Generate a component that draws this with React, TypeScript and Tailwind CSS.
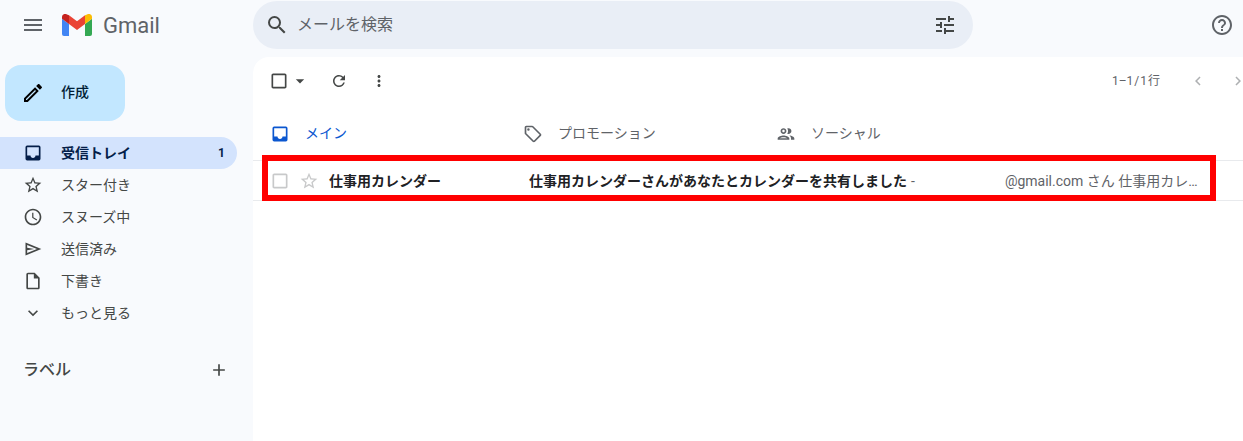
const icons = {
  menu: 'M3 18h18v-2H3v2zm0-5h18v-2H3v2zm0-7v2h18V6H3z',
  search:
    'M15.5 14h-.79l-.28-.27A6.47 6.47 0 0 0 16 9.5 6.5 6.5 0 1 0 9.5 16c1.61 0 3.09-.59 4.23-1.57l.27.28v.79l5 4.99L20.49 19l-4.99-5zm-6 0C7.01 14 5 11.99 5 9.5S7.01 5 9.5 5 14 7.01 14 9.5 11.99 14 9.5 14z',
  tune: 'M3 17v2h6v-2H3zM3 5v2h10V5H3zm10 16v-2h8v-2h-8v-2h-2v6h2zM7 9v2H3v2h4v2h2V9H7zm14 4v-2H11v2h10zm-6-4h2V7h4V5h-4V3h-2v6z',
  help: 'M11 18h2v-2h-2v2zm1-16C6.48 2 2 6.48 2 12s4.48 10 10 10 10-4.48 10-10S17.52 2 12 2zm0 18c-4.41 0-8-3.59-8-8s3.59-8 8-8 8 3.59 8 8-3.59 8-8 8zm0-14c-2.21 0-4 1.79-4 4h2c0-1.1.9-2 2-2s2 .9 2 2c0 2-3 1.75-3 5h2c0-2.25 3-2.5 3-5 0-2.21-1.79-4-4-4z',
  pencil:
    'M14.06 9.02l.92.92L5.92 19H5v-.92l9.06-9.06M17.66 3c-.25 0-.51.1-.7.29l-1.83 1.83 3.75 3.75 1.83-1.83a.996.996 0 0 0 0-1.41l-2.34-2.34c-.2-.2-.45-.29-.71-.29zm-3.6 3.19L3 17.25V21h3.75L17.81 9.94l-3.75-3.75z',
  inbox:
    'M19 3H5a2 2 0 0 0-2 2v14a2 2 0 0 0 2 2h14a2 2 0 0 0 2-2V5a2 2 0 0 0-2-2zm0 12h-4c0 1.66-1.34 3-3 3s-3-1.34-3-3H5V5h14v10z',
  star: 'M22 9.24l-7.19-.62L12 2 9.19 8.63 2 9.24l5.46 4.73L5.82 21 12 17.27 18.18 21l-1.63-7.03L22 9.24zM12 15.4l-3.76 2.27 1-4.28-3.32-2.88 4.38-.38L12 6.1l1.71 4.04 4.38.38-3.32 2.88 1 4.28L12 15.4z',
  clock:
    'M11.99 2C6.47 2 2 6.48 2 12s4.47 10 9.99 10C17.52 22 22 17.52 22 12S17.52 2 11.99 2zM12 20c-4.42 0-8-3.58-8-8s3.58-8 8-8 8 3.58 8 8-3.58 8-8 8zm.5-13H11v6l5.25 3.15.75-1.23-4.5-2.67z',
  send: 'M3 4.3L22 12 3 19.7zM5 7.3v3.1l8.6 1.6L5 13.6v3.1L16.7 12z',
  draft:
    'M14 2H6c-1.1 0-1.99.9-1.99 2L4 20c0 1.1.89 2 1.99 2H18c1.1 0 2-.9 2-2V8l-6-6zm4 18H6V4h7v5h5v11z',
  chevronDown: 'M7.41 8.59L12 13.17l4.59-4.58L18 10l-6 6-6-6 1.41-1.41z',
  plus: 'M19 13h-6v6h-2v-6H5v-2h6V5h2v6h6v2z',
  checkbox:
    'M19 5v14H5V5h14m0-2H5c-1.1 0-2 .9-2 2v14c0 1.1.9 2 2 2h14c1.1 0 2-.9 2-2V5c0-1.1-.9-2-2-2z',
  caret: 'M7 10l5 5 5-5z',
  refresh:
    'M17.65 6.35A7.958 7.958 0 0 0 12 4c-4.42 0-7.99 3.58-7.99 8s3.57 8 7.99 8c3.73 0 6.84-2.55 7.73-6h-2.08A5.99 5.99 0 0 1 12 18c-3.31 0-6-2.69-6-6s2.69-6 6-6c1.66 0 3.14.69 4.22 1.78L13 11h7V4l-2.35 2.35z',
  more: 'M12 8c1.1 0 2-.9 2-2s-.9-2-2-2-2 .9-2 2 .9 2 2 2zm0 2c-1.1 0-2 .9-2 2s.9 2 2 2 2-.9 2-2-.9-2-2-2zm0 6c-1.1 0-2 .9-2 2s.9 2 2 2 2-.9 2-2-.9-2-2-2z',
  chevronLeft: 'M15.41 7.41L14 6l-6 6 6 6 1.41-1.41L10.83 12z',
  chevronRight: 'M8.59 16.59L10 18l6-6-6-6-1.41 1.41L13.17 12z',
  tag: 'M21.41 11.58l-9-9C12.05 2.22 11.55 2 11 2H4c-1.1 0-2 .9-2 2v7c0 .55.22 1.05.59 1.42l9 9c.36.36.86.58 1.41.58s1.05-.22 1.41-.59l7-7c.37-.36.59-.86.59-1.41s-.23-1.06-.59-1.42zM13 20.01L4 11V4h7v-.01l9 9-7 7.02z M6.5 5A1.5 1.5 0 1 0 6.5 8 1.5 1.5 0 0 0 6.5 5z',
  group:
    'M9 13.75c-2.34 0-7 1.17-7 3.5V19h14v-1.75c0-2.33-4.66-3.5-7-3.5zM4.34 17c.84-.58 2.87-1.25 4.66-1.25s3.82.67 4.66 1.25H4.34zM9 12c1.93 0 3.5-1.57 3.5-3.5S10.93 5 9 5 5.5 6.57 5.5 8.5 7.07 12 9 12zm0-5c.83 0 1.5.67 1.5 1.5S9.83 10 9 10s-1.5-.67-1.5-1.5S8.17 7 9 7zm7.04 6.81c1.16.84 1.96 1.96 1.96 3.44V19h4v-1.75c0-2.02-3.5-3.17-5.96-3.44zM15 12c1.93 0 3.5-1.57 3.5-3.5S16.93 5 15 5c-.54 0-1.04.13-1.5.35.63.89 1 1.98 1 3.15s-.37 2.26-1 3.15c.46.22.96.35 1.5.35z',
};

function Icon({ d, className }: { d: string; className: string }) {
  return (
    <svg viewBox="0 0 24 24" fill="currentColor" fillRule="evenodd" className={`shrink-0 ${className}`}>
      <path d={d} />
    </svg>
  );
}

function GmailLogo() {
  return (
    <svg viewBox="0 0 30 22" className="h-[22px] w-[30px] shrink-0">
      <path d="M2 22h5V10L0 4.8V20a2 2 0 0 0 2 2z" fill="#4285f4" />
      <path d="M23 22h5a2 2 0 0 0 2-2V4.8L23 10z" fill="#34a853" />
      <path d="M23 1.2V10l7-5.2V3c0-2.6-3-4-5-2.5z" fill="#fbbc04" />
      <path d="M7 10V1.2l8 6 8-6V10l-8 6z" fill="#ea4335" />
      <path d="M0 3v1.8L7 10V1.2L5 .5C3-1 0 .4 0 3z" fill="#c5221f" />
    </svg>
  );
}

function NavItem({ d, label, active, count }: { d: string; label: string; active?: boolean; count?: string }) {
  return (
    <div
      className={`flex h-8 w-[237px] items-center rounded-r-full pl-[23px] pr-[12px] text-[14px] ${
        active ? 'bg-[#d3e3fd] font-bold text-[#041e49]' : 'text-[#444746]'
      }`}
    >
      <Icon d={d} className={`h-5 w-5 ${active ? 'text-[#041e49]' : 'text-[#444746]'}`} />
      <span className="ml-[18px] flex-1">{label}</span>
      {count && <span className="text-[12px]">{count}</span>}
    </div>
  );
}

function Tab({ d, label, active }: { d: string; label: string; active?: boolean }) {
  return (
    <div className={`flex h-full w-[253px] items-center pl-[17px] ${active ? 'text-[#0b57d0]' : 'text-[#5f6368]'}`}>
      <Icon d={d} className="h-5 w-5" />
      <span className="ml-[15px] text-[14px]">{label}</span>
    </div>
  );
}

export default function App() {
  return (
    <div
      className="relative flex h-[441px] w-[1243px] flex-col overflow-hidden bg-[#f8fafd] text-[#202124]"
      style={{ fontFamily: 'Roboto, "Noto Sans CJK JP", sans-serif' }}
    >
      <header className="flex h-[57px] shrink-0 items-start">
        <div className="flex h-[50px] w-[253px] shrink-0 items-center pl-[21px]">
          <Icon d={icons.menu} className="h-6 w-6 text-[#5f6368]" />
          <div className="ml-[17px]">
            <GmailLogo />
          </div>
          <span className="ml-[11px] mt-[2px] text-[22px] leading-none text-[#5f6368]">Gmail</span>
        </div>
        <div className="mt-px flex h-12 w-[720px] items-center rounded-full bg-[#e9eef6] pl-[12px] pr-[16px]">
          <Icon d={icons.search} className="h-6 w-6 text-[#444746]" />
          <span className="ml-[8px] flex-1 text-[16px] text-[#5f6368]">メールを検索</span>
          <Icon d={icons.tune} className="h-6 w-6 text-[#444746]" />
        </div>
        <div className="flex h-[50px] flex-1 items-center justify-end pr-[9px]">
          <Icon d={icons.help} className="h-6 w-6 text-[#5f6368]" />
        </div>
      </header>

      <div className="flex min-h-0 flex-1">
        <aside className="w-[253px] shrink-0">
          <div className="ml-[5px] mt-2 flex h-14 w-[120px] items-center rounded-2xl bg-[#c2e7ff] pb-[1px] pl-[16px] text-[14px] font-medium text-[#001d35]">
            <Icon d={icons.pencil} className="h-6 w-6 text-black" />
            <span className="ml-[16px]">作成</span>
          </div>
          <nav className="mt-4">
            <NavItem d={icons.inbox} label="受信トレイ" active count="1" />
            <NavItem d={icons.star} label="スター付き" />
            <NavItem d={icons.clock} label="スヌーズ中" />
            <NavItem d={icons.send} label="送信済み" />
            <NavItem d={icons.draft} label="下書き" />
            <NavItem d={icons.chevronDown} label="もっと見る" />
          </nav>
          <div className="mt-[29px] flex w-[237px] items-center justify-between pl-[23px] pr-[8px]">
            <span className="text-[16px] font-medium text-[#444746]">ラベル</span>
            <Icon d={icons.plus} className="h-[20px] w-[20px] text-[#444746]" />
          </div>
        </aside>

        <main className="flex min-w-0 flex-1 flex-col rounded-tl-2xl bg-white">
          <div className="flex h-[48px] shrink-0 items-center text-[#444746]">
            <Icon d={icons.checkbox} className="ml-[16px] h-5 w-5" />
            <Icon d={icons.caret} className="ml-[1px] h-5 w-5" />
            <Icon d={icons.refresh} className="ml-[20px] h-[18px] w-[18px]" />
            <Icon d={icons.more} className="ml-[22px] h-[18px] w-[18px]" />
            <span className="ml-auto text-[12px] text-[#5f6368] [word-spacing:-2px]">1–1 / 1 行</span>
            <Icon d={icons.chevronLeft} className="ml-[29px] h-[18px] w-[18px] text-[#aeb0b2]" />
            <Icon d={icons.chevronRight} className="ml-[22px] mr-[-4px] h-[18px] w-[18px] text-[#aeb0b2]" />
          </div>

          <div className="flex h-[55px] shrink-0 items-center pt-[2px]">
            <Tab d={icons.inbox} label="メイン" active />
            <Tab d={icons.tag} label="プロモーション" />
            <Tab d={icons.group} label="ソーシャル" />
          </div>

          <div className="flex h-[41px] shrink-0 items-center border-y border-[#e8eaed] pt-[1px] text-[14px]">
            <Icon d={icons.checkbox} className="ml-[17px] h-[20px] w-[20px] text-[#c8c9ca]" />
            <Icon d={icons.star} className="ml-[9px] h-[20px] w-[20px] text-[#c8c9ca]" />
            <span className="ml-[10px] w-[200px] shrink-0 font-bold text-[#202124]">仕事用カレンダー</span>
            <span className="shrink-0 font-bold text-[#202124]">仕事用カレンダーさんがあなたとカレンダーを共有しました</span>
            <span className="ml-1 shrink-0 text-[#5f6368]">-</span>
            <span className="ml-[90px] w-[194px] shrink-0 truncate text-[#5f6368]">@gmail.com さん 仕事用カレンダーがカレンダーを</span>
          </div>
        </main>
      </div>

      {/* annotation over the first row */}
      <div className="pointer-events-none absolute left-[262px] top-[155px] h-[46px] w-[954px] border-[6px] border-[#ff0000]" />
    </div>
  );
}
